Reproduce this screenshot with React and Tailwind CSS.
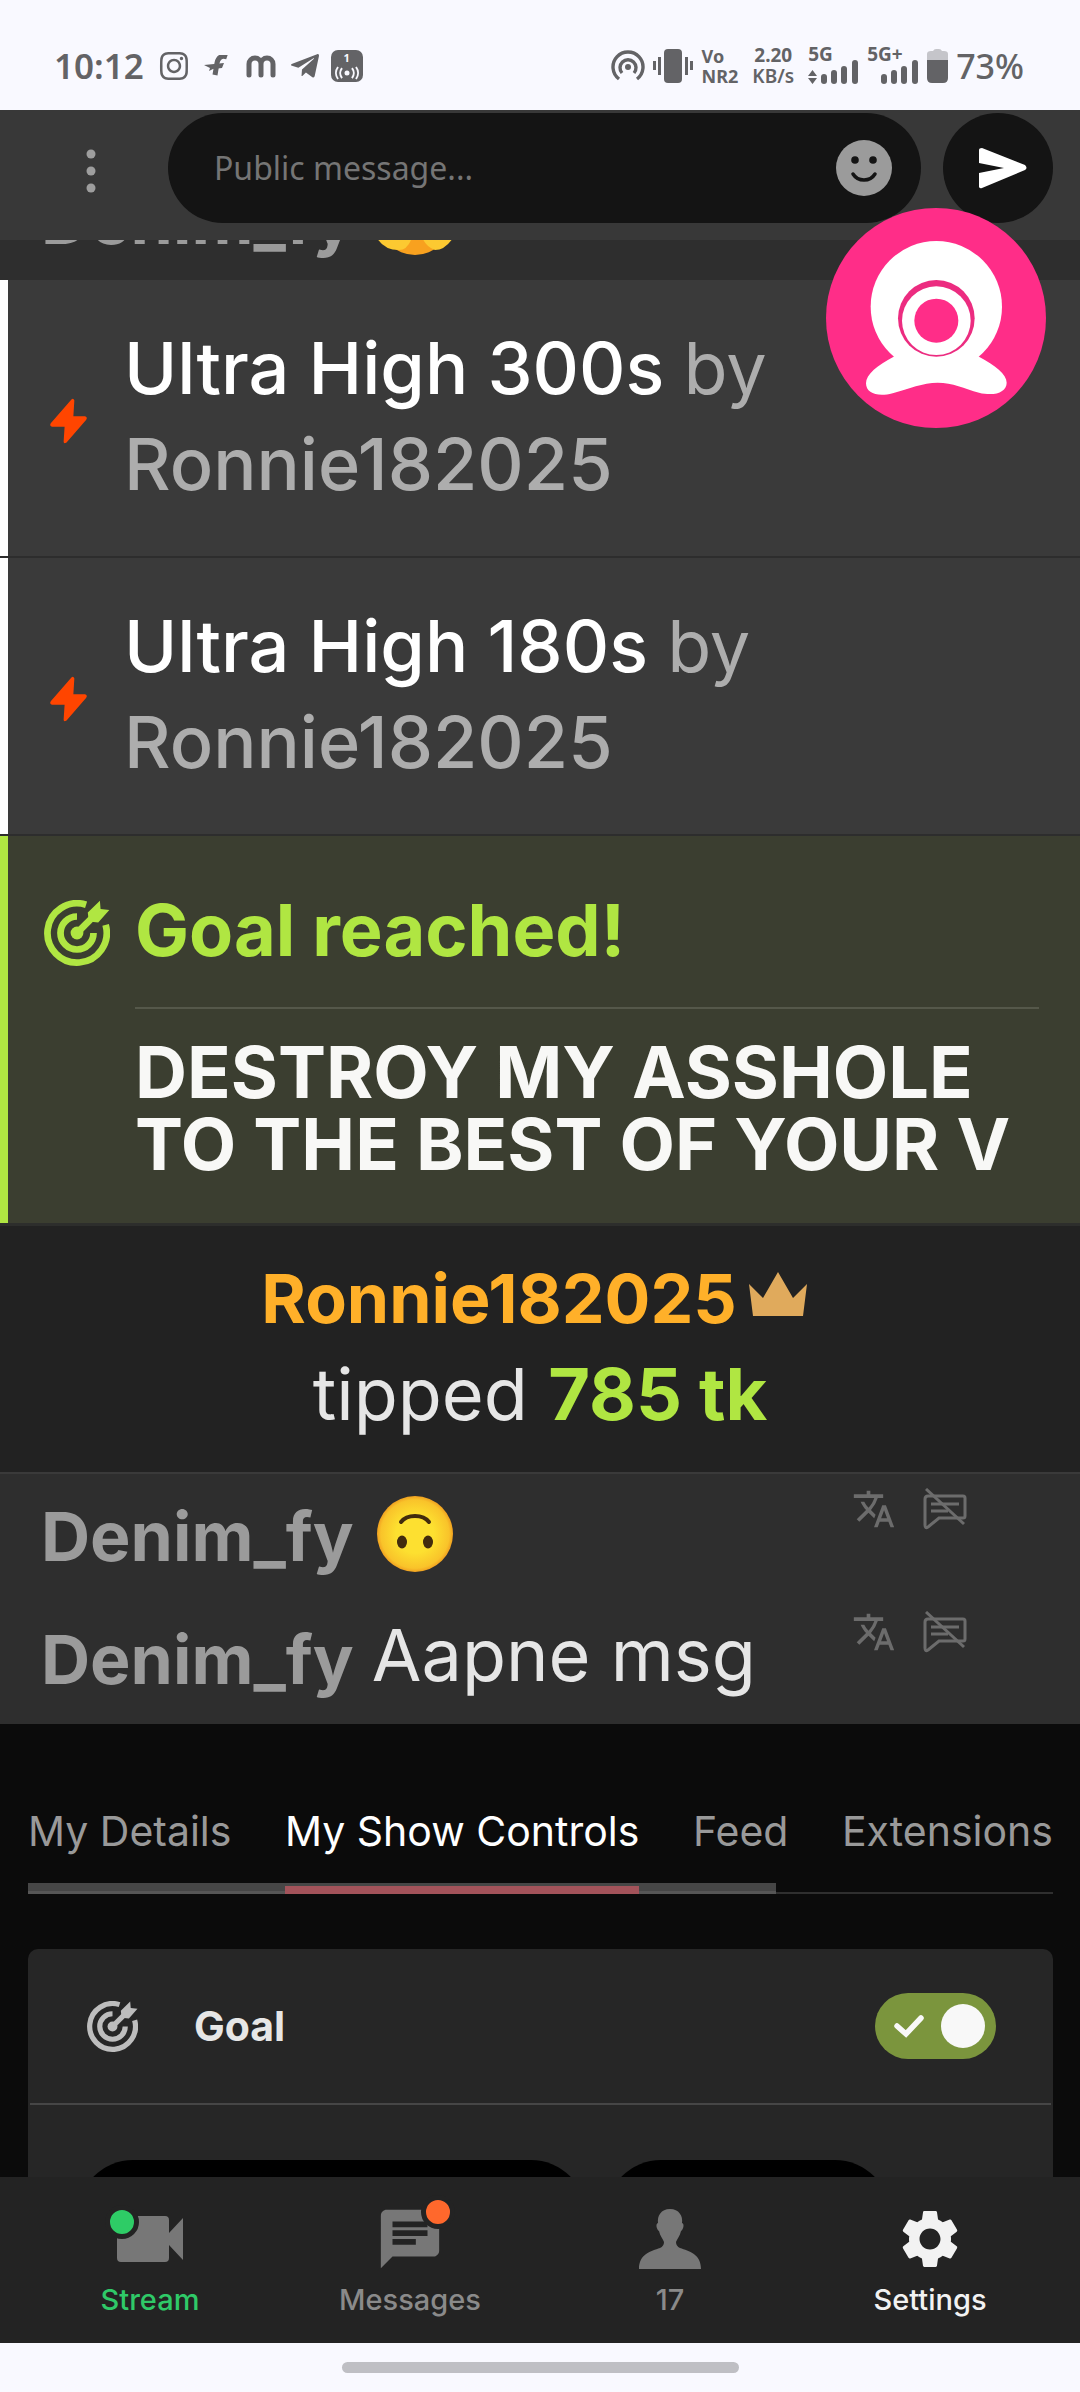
import { useState } from "react";
import { MdChat, MdSettings, MdTranslate } from "react-icons/md";
import { FaInstagram, FaTelegramPlane } from "react-icons/fa";

const boosts = [
  { id: 1, name: "Ultra High 300s", user: "Ronnie182025" },
  { id: 2, name: "Ultra High 180s", user: "Ronnie182025" },
];

const tabs = ["My Details", "My Show Controls", "Feed", "Extensions"];

function SignalBars() {
  return (
    <svg className="h-[24px] w-[37px]" viewBox="0 0 37 24" fill="currentColor">
      <rect x="0" y="14" width="6" height="10" rx="3" />
      <rect x="10" y="10" width="6" height="14" rx="3" />
      <rect x="20" y="6" width="6" height="18" rx="3" />
      <rect x="31" y="0" width="6" height="24" rx="3" />
    </svg>
  );
}

function StatusBar() {
  return (
    <div className="flex h-[110px] shrink-0 items-center justify-between bg-[#f9f9ff] pt-[21px] pr-[56px] pl-[54px] font-['Noto_Sans',sans-serif] text-[#636366]">
      <div className="flex items-center">
        <span className="mr-[14px] text-[35px] leading-[40px] font-semibold">
          10:12
        </span>
        <FaInstagram className="mr-[14px] size-[32px]" />
        <svg className="mr-[18px] h-[22px] w-[24px]" viewBox="0 0 24 22">
          <path
            d="M23 2c-6-2-9 1-10 6l-2 12"
            fill="none"
            stroke="currentColor"
            strokeWidth="5"
          />
          <path d="M0 10l20-2-2 5-9 1-4 2 1-3z" fill="currentColor" />
        </svg>
        <svg
          className="mr-[13px] h-[24px] w-[30px]"
          viewBox="0 0 30 24"
          fill="none"
          stroke="currentColor"
          strokeWidth="5"
          strokeLinecap="round"
        >
          <path d="M3 21V10a6 6 0 0 1 12 0v11M15 10a6 6 0 0 1 12 0v11" />
        </svg>
        {/* telegram */}
        <FaTelegramPlane className="mr-[10px] size-[32px]" />
        <span className="flex h-[32px] w-[32px] flex-col items-center rounded-[7px] bg-[#636366] text-[#f9f9ff]">
          <span className="text-[11px] leading-[16px] font-bold">1</span>
          <svg
            className="h-[14px] w-[24px]"
            viewBox="0 0 24 14"
            fill="none"
            stroke="currentColor"
            strokeWidth="2"
          >
            <circle cx="12" cy="7" r="2.5" fill="currentColor" stroke="none" />
            <path d="M7 2a8 8 0 0 0 0 10M17 2a8 8 0 0 1 0 10M3 1a10 10 0 0 0 0 12M21 1a10 10 0 0 1 0 12" />
          </svg>
        </span>
      </div>

      <div className="flex items-center">
        <svg
          className="mr-[8px] h-[32px] w-[34px]"
          viewBox="0 0 34 32"
          fill="none"
          stroke="currentColor"
          strokeWidth="3.4"
        >
          <path d="M8 29a15 15 0 1 1 18 0" />
          <path d="M11 23a8 8 0 1 1 12 0" />
          <circle cx="17" cy="17" r="3" fill="currentColor" stroke="none" />
        </svg>
        <svg
          className="mr-[9px] h-[34px] w-[40px]"
          viewBox="0 0 40 34"
          fill="currentColor"
        >
          <rect x="11" y="0" width="18" height="34" rx="4" />
          <rect x="5" y="8" width="3" height="18" />
          <rect x="0" y="12" width="3" height="9" />
          <rect x="32" y="8" width="3" height="18" />
          <rect x="37" y="12" width="3" height="9" />
        </svg>
        <span className="mr-[14px] text-[18px] leading-[20px] font-bold">
          Vo
          <br />
          NR2
        </span>
        <span className="mr-[14px] text-center text-[19px] leading-[21px] font-bold">
          2.20
          <br />
          <span className="font-semibold">KB/s</span>
        </span>
        <span className="mr-[9px] flex flex-col text-[19px] leading-[12px] font-bold">
          5G
          <span className="flex items-end gap-[4px]">
            <svg className="h-[14px] w-[9px]" viewBox="0 0 9 14" fill="currentColor">
              <path d="M0 6l4.500-6L9 6zM0 8h9l-4.500 6z" />
            </svg>
            <SignalBars />
          </span>
        </span>
        <span className="mr-[9px] flex flex-col text-[19px] leading-[12px] font-bold">
          5G+
          <span className="flex justify-end pl-[14px]">
            <SignalBars />
          </span>
        </span>
        <svg className="mr-[8px] h-[34px] w-[21px]" viewBox="0 0 21 34">
          <path d="M0 11V5q0-3 4-3h2q1-2 3-2h3q2 0 3 2h2q4 0 4 3v6z" fill="#c5c5ca" />
          <path d="M0 11h21v18q0 5-5 5H5q-5 0-5-5z" fill="currentColor" />
        </svg>
        <span className="text-[34px] leading-[40px] font-medium">73%</span>
      </div>
    </div>
  );
}

function GoalIcon({ className }) {
  return (
    <svg className={className} viewBox="0 0 196 196" fill="none">
      <g stroke="currentColor" strokeWidth="20">
        <path d="M183 74A88 88 0 1 1 125 14" />
        <path d="M147 98A49 49 0 1 1 98 49" />
        <path d="M98 98L142 54" />
      </g>
      <circle cx="98" cy="98" r="19" fill="currentColor" />
      <path d="M166 2l2 25 26 3-33 37-28-3-3-27z" fill="currentColor" />
    </svg>
  );
}

function ChatOffIcon() {
  return (
    <svg
      className="h-[42px] w-[44px]"
      viewBox="0 0 44 42"
      fill="none"
      stroke="currentColor"
      strokeWidth="3"
    >
      <path d="M5 8h35q2 0 2 2v18q0 2-2 2H16L5 39q-3 2-3-2V11q0-3 3-3zM8 16h28M8 23h17" />
      <path d="M3 1l38 35" />
    </svg>
  );
}

function UpsideDownFace() {
  return (
    <svg className="size-[78px]" viewBox="0 0 78 78" role="img" aria-label="upside-down face">
      <defs>
        <radialGradient id="face" cx="50%" cy="50%" r="50%">
          <stop offset="0.500" stopColor="#fde030" />
          <stop offset="0.900" stopColor="#f9c32a" />
          <stop offset="1" stopColor="#f0a020" />
        </radialGradient>
      </defs>
      <circle cx="39" cy="39" r="38" fill="url(#face)" />
      <path
        d="M25 27c6-8 22-8 28 0"
        fill="none"
        stroke="#422b0d"
        strokeWidth="4"
        strokeLinecap="round"
      />
      <ellipse cx="26" cy="47" rx="5" ry="6.500" fill="#422b0d" />
      <ellipse cx="52" cy="47" rx="5" ry="6.500" fill="#422b0d" />
    </svg>
  );
}

function HandsFace() {
  return (
    <svg className="size-[78px]" viewBox="0 0 78 78">
      <circle cx="39" cy="39" r="36" fill="#f8a11f" />
      <path d="M2 50h36q-4 20-15 20Q8 70 1 58z" fill="#fcc931" />
      <path d="M44 50h34l-1 8q-8 12-18 12-12-4-15-20z" fill="#fcc931" />
    </svg>
  );
}

function ChatRow({ children, actions = true }) {
  return (
    <div className="flex h-[123px] shrink-0 items-center pl-[41px]">
      <strong className="mr-[18px] text-[68px] leading-[96px] font-bold text-[#9b9b9b]">
        Denim_fy
      </strong>
      {children}
      {actions && (
        <div className="ml-auto flex items-center gap-[27px] self-start pt-[13px] pr-[113px] text-[#6c6c6c]">
          <button type="button" aria-label="Translate">
            <MdTranslate className="size-[44px]" />
          </button>
          <button type="button" aria-label="Hide message">
            <ChatOffIcon />
          </button>
        </div>
      )}
    </div>
  );
}

function Header() {
  return (
    <header className="relative flex h-[130px] shrink-0 items-start bg-[#383838] pt-[3px] pr-[27px]">
      <button
        type="button"
        aria-label="More"
        className="flex h-[116px] w-[168px] items-center justify-center pl-[14px] text-[#9e9e9e]"
      >
        <svg className="h-[44px] w-[10px]" viewBox="0 0 10 44" fill="currentColor">
          <circle cx="5" cy="5" r="4.500" />
          <circle cx="5" cy="22" r="4.500" />
          <circle cx="5" cy="39" r="4.500" />
        </svg>
      </button>
      <div className="mr-[22px] flex h-[110px] min-w-0 flex-1 items-center rounded-full bg-[#141414] pr-[29px] pl-[46px]">
        <input
          type="text"
          aria-label="Public message"
          placeholder="Public message..."
          className="min-w-0 flex-1 bg-transparent font-['Noto_Sans',sans-serif] text-[32px] leading-[48px] text-white outline-none placeholder:text-[#757575]"
        />
        <button type="button" aria-label="Emoji">
          <svg className="size-[56px]" viewBox="0 0 56 56">
            <circle cx="28" cy="28" r="28" fill="#9b9b9b" />
            <circle cx="19" cy="20" r="3.800" fill="#141414" />
            <circle cx="37" cy="20" r="3.800" fill="#141414" />
            <path
              d="M17 34c5 8 17 8 22 0"
              fill="none"
              stroke="#141414"
              strokeWidth="3.500"
              strokeLinecap="round"
            />
          </svg>
        </button>
      </div>
      <button
        type="button"
        aria-label="Send"
        className="flex size-[110px] items-center justify-center rounded-full bg-[#141414] pl-[10px]"
      >
        <svg className="h-[42px] w-[48px]" viewBox="0 0 48 42">
          <path
            d="M3 1l43 17q3 3 0 5L3 41q-2 1-3-1V26l25-5L0 16V3q0-2 3-2z"
            fill="#fff"
          />
        </svg>
      </button>

      {/* floating camera bubble */}
      <button
        type="button"
        aria-label="Camera"
        className="absolute top-[98px] right-[34px] z-10 size-[220px]"
      >
        <svg className="size-[220px]" viewBox="0 0 660 660">
          <circle cx="330" cy="330" r="330" fill="#ff2d88" />
          <circle cx="331" cy="296" r="197" fill="#fff" />
          <path
            d="M203 446C155 472 120 498 120 526c0 30 35 42 80 30 50-14 90-32 135-32s80 18 124 30c48 12 83-2 83-30 0-26-35-52-83-78l-80-60H280z"
            fill="#fff"
          />
          <circle cx="331" cy="331" r="115" fill="#ec2c80" />
          <circle cx="331" cy="338" r="103" fill="#fff" />
          <circle cx="331" cy="338" r="66" fill="#ff2d88" />
        </svg>
      </button>
    </header>
  );
}

function BoostRow({ name, user }) {
  return (
    <div className="border-b-2 border-[#2d2d2d]">
      <div className="flex items-center border-l-8 border-white bg-[#3a3a3a] pt-[40px] pr-[40px] pb-[44px] pl-[42px]">
        <svg className="mt-[10px] mr-[37px] h-[46px] w-[37px] shrink-0" viewBox="0 0 38 46">
          <path
            d="M22 1q2-2 3 1l-1 16h12q3 1 1 4L17 45q-3 2-3-1l1-15H2q-3-1-1-4z"
            fill="#ff4500"
          />
        </svg>
        <p className="text-[72px] leading-[96px] font-medium text-[#adadad]">
          <span className="text-white">{name}</span>{" "}
          <span className="font-normal">by</span> {user}
        </p>
      </div>
    </div>
  );
}

function GoalReached() {
  return (
    <div className="border-b-3 border-[#2d2e2c]">
      <div className="flex gap-[25px] border-l-8 border-[#b0e642] bg-[#3b3e30] pt-[46px] pr-[41px] pb-[43px] pl-[36px]">
        <GoalIcon className="mt-[18px] size-[66px] shrink-0 text-[#b0e642]" />
        <div className="flex-1">
          <h2 className="border-b-2 border-[#55584a] pb-[29px] text-[72px] leading-[96px] font-bold text-[#b0e642]">
            Goal reached!
          </h2>
          <p className="pt-[27px] text-[72px] leading-[72px] font-bold text-[#f8f8f6]">
            DESTROY MY ASSHOLE TO THE BEST OF YOUR V
          </p>
        </div>
      </div>
    </div>
  );
}

function TipMessage() {
  return (
    <div className="border-b-2 border-[#3a3a3a] bg-[#222222] pt-[24px] pb-[30px] text-center text-[72px] leading-[96px]">
      <div className="flex items-center justify-center pr-[12px]">
        <strong className="text-[68px] font-bold text-[#ffb029]">
          Ronnie182025
        </strong>
        <svg className="mb-[8px] ml-[12px] h-[44px] w-[58px]" viewBox="0 0 58 44">
          <path d="M0 12l14 14L29 0l15 26 14-14-4 32H4z" fill="#e0aa5c" />
        </svg>
      </div>
      <p className="text-[#e6e6e6]">
        tipped <strong className="font-bold text-[#b0e642]">785 tk</strong>
      </p>
    </div>
  );
}

function NavItem({ label, color, children }) {
  return (
    <a
      href="#"
      className={`flex flex-1 flex-col items-center text-[29px] leading-[40px] font-medium ${color}`}
    >
      <span className="relative flex h-[72px] items-center justify-center">
        {children}
      </span>
      <span className="mt-[5px]">{label}</span>
    </a>
  );
}

function BottomNav() {
  return (
    <nav className="flex h-[166px] shrink-0 bg-[#232323] px-[20px] pt-[26px]">
      <NavItem label="Stream" color="text-[#2fc968]">
        <svg className="h-[46px] w-[66px] text-[#777]" viewBox="0 0 66 46" fill="currentColor">
          <path d="M3 0h45q4 0 4 4v13L66 2v42L52 29v13q0 4-4 4H4q-4 0-4-4V3q0-3 3-3z" />
        </svg>
        <span className="absolute top-[2px] left-[-12px] size-[34px] rounded-full border-[5px] border-[#232323] bg-[#2ecc66]"></span>
      </NavItem>
      <NavItem label="Messages" color="text-[#8a8a8a]">
        <MdChat className="size-[70px] text-[#777]" />
        <span className="absolute top-[-8px] right-[-10px] size-[34px] rounded-full border-[5px] border-[#232323] bg-[#ff682c]"></span>
      </NavItem>
      <NavItem label="17" color="text-[#8a8a8a]">
        <svg className="h-[60px] w-[62px] text-[#777]" viewBox="0 0 62 60" fill="currentColor">
          <path d="M31 0c9 0 13 7 12 14 3 1 1 7-1 8-1 5-4 8-5 11q0 4 4 6c9 3 21 6 21 21H0c0-15 12-18 21-21q4-2 4-6c-1-3-4-6-5-11-2-1-4-7-1-8C18 7 22 0 31 0z" />
        </svg>
      </NavItem>
      <NavItem label="Settings" color="text-[#f2f2f2]">
        <MdSettings className="size-[70px]" />
      </NavItem>
    </nav>
  );
}

function App() {
  const [activeTab, setActiveTab] = useState("My Show Controls");
  const [goalOn, setGoalOn] = useState(true);

  return (
    <div className="flex h-screen flex-col overflow-hidden bg-[#0b0b0b] font-['Inter',sans-serif]">
      <StatusBar />
      <Header />

      <section className="shrink-0 bg-[#2e2e2e] pb-[4px]">
        {/* last message scrolled under the header */}
        <div className="flex h-[40px] flex-col justify-end overflow-hidden">
          <ChatRow actions={false}>
            <span className="ml-[4px]">
              <HandsFace />
            </span>
          </ChatRow>
        </div>
        {boosts.map((boost) => (
          <BoostRow key={boost.id} name={boost.name} user={boost.user} />
        ))}
        <GoalReached />
        <TipMessage />
        <ChatRow>
          <span className="ml-[4px] pb-[4px]">
            <UpsideDownFace />
          </span>
        </ChatRow>
        <ChatRow>
          <span className="pb-[8px] text-[72px] leading-[96px] text-[#e6e6e6]">
            Aapne msg
          </span>
        </ChatRow>
      </section>

      <section className="min-h-0 flex-1 overflow-hidden pt-[83px] pr-[27px] pl-[28px]">
        <div className="relative flex justify-between">
          <span className="absolute bottom-0 h-[2px] w-full bg-[#2f2f2f]"></span>
          <span className="absolute bottom-0 h-[11px] w-[73%] border-b-3 border-[#565656] bg-[#464646]"></span>
          {tabs.map((tab) => (
            <button
              key={tab}
              type="button"
              onClick={() => setActiveTab(tab)}
              className={`relative border-b-8 pb-[31px] text-[41px] leading-[48px] whitespace-nowrap ${
                tab === activeTab
                  ? "border-[#a3535a] text-white"
                  : "border-transparent text-[#999]"
              }`}
            >
              {tab}
            </button>
          ))}
        </div>

        <div className="mt-[55px] rounded-t-[10px] bg-[#262626] px-[2px]">
          <div className="flex h-[156px] items-center border-b-2 border-[#464646] pr-[55px] pl-[57px]">
            <GoalIcon className="mr-[56px] size-[51px] text-[#bdbdbd]" />
            <h3 className="text-[41px] leading-[48px] font-bold text-[#e6e6e6]">
              Goal
            </h3>
            <label className="relative ml-auto flex h-[66px] w-[121px] cursor-pointer items-center justify-between rounded-full bg-[#7b953d] pr-[11px] pl-[18px]">
              <input
                type="checkbox"
                aria-label="Goal"
                checked={goalOn}
                onChange={(e) => setGoalOn(e.target.checked)}
                className="absolute inset-0 cursor-pointer opacity-0"
              />
              <svg
                className="h-[24px] w-[32px]"
                viewBox="0 0 32 24"
                fill="none"
                stroke="#f8f8f8"
                strokeWidth="5.500"
                strokeLinecap="round"
              >
                <path d="M4 12l9 8L28 4" />
              </svg>
              <span className="size-[44px] rounded-full bg-[#f8f8f8]"></span>
            </label>
          </div>
          <div className="flex gap-[20px] px-[48px] pt-[55px]">
            <span className="h-[110px] w-[508px] rounded-full bg-black"></span>
            <span className="h-[110px] w-[284px] rounded-full bg-black"></span>
          </div>
        </div>
      </section>

      <BottomNav />
      <div className="flex h-[49px] shrink-0 items-center justify-center bg-[#f9f9ff]">
        <span className="h-[11px] w-[397px] rounded-full bg-[#bfbfc4]"></span>
      </div>
    </div>
  );
}

export default App;
